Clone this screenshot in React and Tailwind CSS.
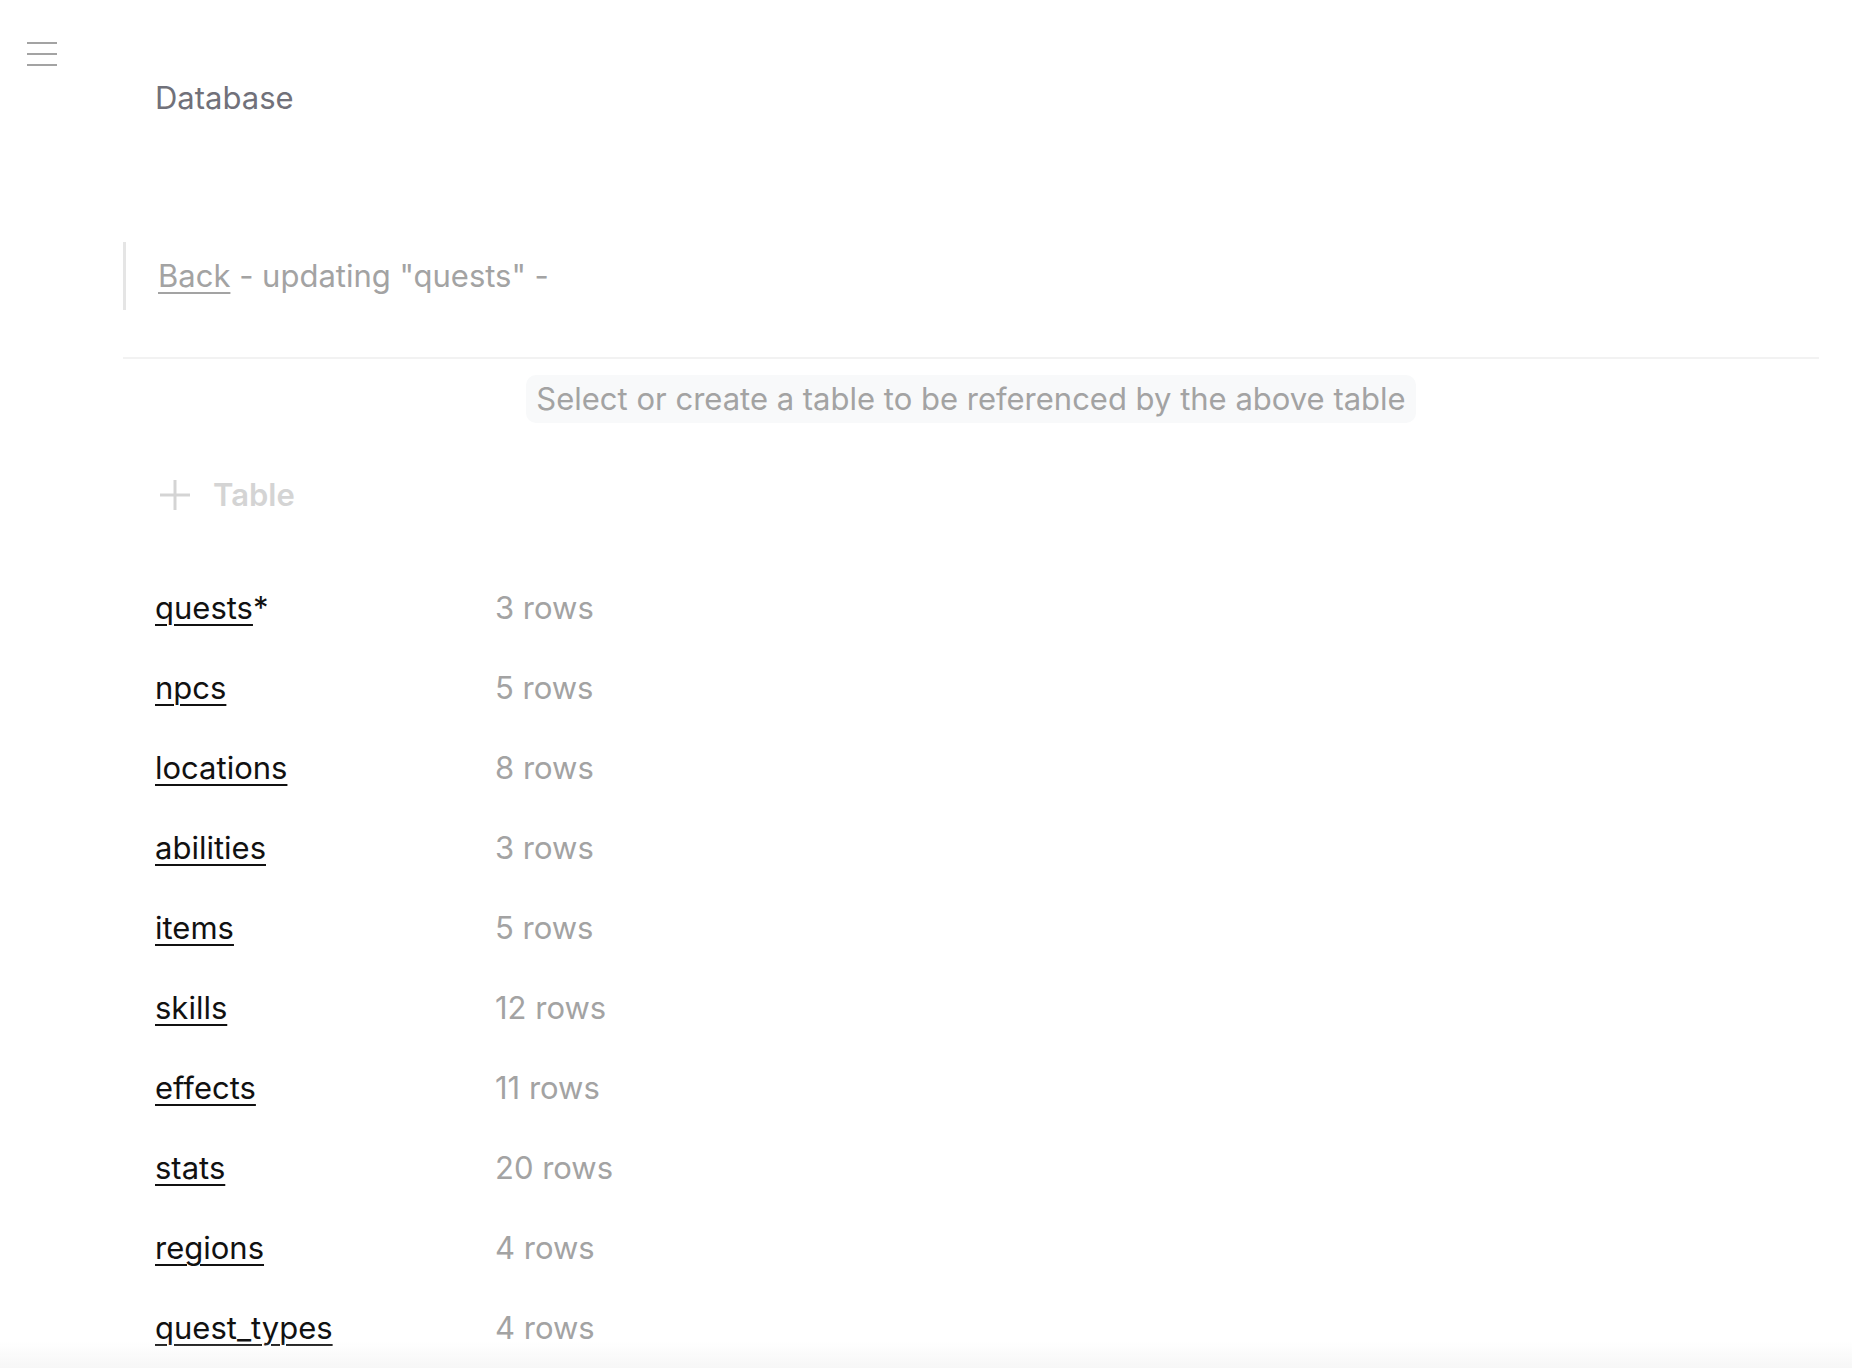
import React from "react";

const rows = [
  ["quests*", "3 rows"],
  ["npcs", "5 rows"],
  ["locations", "8 rows"],
  ["abilities", "3 rows"],
  ["items", "5 rows"],
  ["skills", "12 rows"],
  ["effects", "11 rows"],
  ["stats", "20 rows"],
  ["regions", "4 rows"],
  ["quest_types", "4 rows"],
];

export default function App() {
  return (
    <div
      className="relative flex min-h-screen bg-white"
      style={{ fontFamily: "Inter, 'Noto Sans', sans-serif" }}
    >
      <div className="w-[123px] shrink-0 pl-[27px] pt-[42px]">
        <div className="flex w-[30px] flex-col gap-[9px]">
          <div className="h-[2px] bg-[#a3a3a3]" />
          <div className="h-[2px] bg-[#a3a3a3]" />
          <div className="h-[2px] bg-[#a3a3a3]" />
        </div>
      </div>
      <main className="flex-1 pr-[33px]">
        <h1 className="pl-[32px] pt-[78px] text-[31px] leading-[40px] text-[#71717a]">
          Database
        </h1>
        <div className="mt-[124px] border-l-[3px] border-[#e5e5e5] py-[12px] pl-[32px] text-[31px] leading-[44px] text-[#a3a3a3]">
          <span className="underline decoration-[2px] underline-offset-[5px]">Back</span>
          {' - updating "quests" -'}
        </div>
        <div className="mt-[47px] h-[2px] bg-[#f2f2f2]" />
        <div className="mt-[16px] flex justify-center">
          <div className="rounded-[10px] bg-[#f8f9fa] px-[10px] py-[2px] text-[31px] leading-[44px] text-[#a3a3a3]">
            Select or create a table to be referenced by the above table
          </div>
        </div>
        <div className="mt-[48px] flex items-center gap-[22px] pl-[36px] text-[#d4d4d4]">
          <svg width="32" height="32" viewBox="0 0 32 32" className="shrink-0">
            <line x1="16" y1="1" x2="16" y2="31" stroke="#d4d4d4" strokeWidth="3" />
            <line x1="1" y1="16" x2="31" y2="16" stroke="#d4d4d4" strokeWidth="3" />
          </svg>
          <span className="text-[31px] font-semibold leading-[48px]">Table</span>
        </div>
        <div className="mt-[49px] flex flex-col pl-[32px]">
          {rows.map(([name, count]) => (
            <div key={name} className="flex h-[80px] items-center">
              <div className="w-[340px] shrink-0 text-[31px] leading-[44px] text-[#111111]">
                {name.endsWith("*") ? (
                  <>
                    <span className="underline decoration-[2px] underline-offset-[5px]">
                      {name.slice(0, -1)}
                    </span>
                    *
                  </>
                ) : (
                  <span className="underline decoration-[2px] underline-offset-[5px]">{name}</span>
                )}
              </div>
              <div className="text-[31px] leading-[44px] text-[#a3a3a3]">{count}</div>
            </div>
          ))}
        </div>
      </main>
      <div className="pointer-events-none fixed bottom-0 left-0 right-0 h-[26px] bg-gradient-to-b from-transparent to-[#f7f7f7]" />
    </div>
  );
}
